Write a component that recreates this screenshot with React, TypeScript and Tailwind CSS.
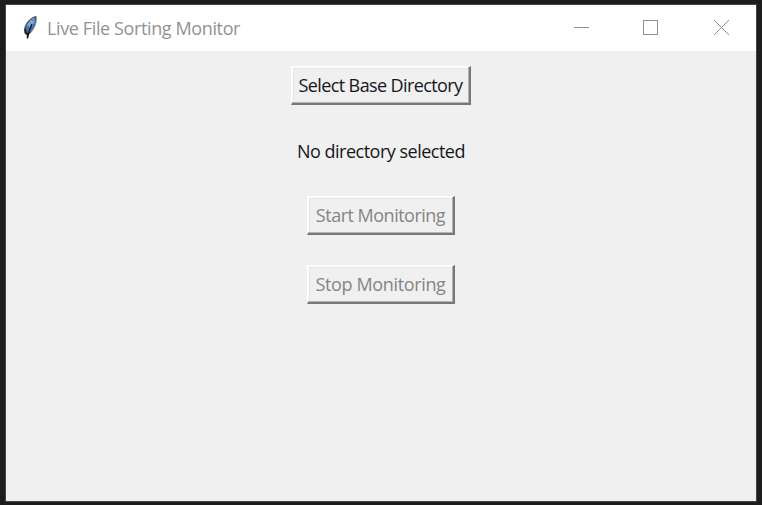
import type { ReactNode } from 'react';

function Feather() {
  return (
    <svg className="block h-6 w-[15px]" viewBox="0 0 15 24" fill="none">
      <path d="M13.500 0C10.500.2 6.500 3 3.500 7 1.200 10 .5 14 1.500 17.500l3 2C9 17 12.500 11 13.500 5z" fill="#4f5054" />
      <path d="M12 1.500C8.500 3 5 6.500 3.500 10c-1 3-1.400 5-.7 7l2 .8C9 14.500 12 9 12.500 3z" fill="#3f75b4" />
      <path d="M11 2.500C8 4.500 5.500 7 4.500 10M9.500 5L6 10.500M11.500 4.500L8.500 10" stroke="#78aee6" strokeWidth="1.500" />
      <path d="M9 8C7 12 5.500 16 4.500 22" stroke="#111" strokeWidth="1.200" />
      <path d="M13.500 1.500C13.500 7 11.500 12 8 16" stroke="#a0a0a0" strokeWidth=".8" />
      <path d="M2 13l1.500 5M4.500 17v5.500" stroke="#171717" strokeWidth="1.500" />
    </svg>
  );
}

function TkButton({ children, className, disabled = false }: { children: ReactNode; className: string; disabled?: boolean }) {
  return (
    <button
      disabled={disabled}
      className={`flex h-[39px] shrink-0 items-center justify-center border-t-[1.500px] border-r-2 border-b-2 border-l-[1.500px] border-t-white border-r-[#777] border-b-[#777] border-l-white bg-[#f0f0f0] whitespace-nowrap shadow-[inset_-1px_-1px_0_#b5b5b5,inset_1px_1px_0_#f9f9f9,inset_2px_2px_0_#e8e8e8] ${disabled ? 'text-[#858585]' : 'text-[#171520]'} ${className}`}
    >
      {children}
    </button>
  );
}

export default function App() {
  return (
    <div className="h-[505px] w-[762px] overflow-hidden bg-[#1d1d1d] pt-1 pl-[5px] font-['Open_Sans','Noto_Sans',sans-serif]">
      <main className="flex h-[498px] w-[752px] flex-col border border-[#444] bg-[#f0f0f0]">
        <header className="flex h-[46px] shrink-0 items-center bg-white pl-[17px]">
          <Feather />
          <h1 className="ml-[9px] w-[200px] text-[18px] leading-6 font-normal tracking-[-0.380px] whitespace-nowrap text-[#929292]">Live File Sorting Monitor</h1>
          <svg className="ml-[326px] block h-4 w-[170px]" viewBox="0 0 170 16" fill="none" stroke="#909090" shapeRendering="crispEdges">
            <path d="M1 7.500h15M70.500.5h14v14h-14z" />
            <path d="M141 0l15 15M156 0l-15 15" />
          </svg>
        </header>
        <section className="flex flex-col items-center pt-[15px] text-[18px]">
          <TkButton className="w-[180px] tracking-[-0.600px]">Select Base Directory</TkButton>
          <p className="mt-[34px] h-6 leading-6 tracking-[-0.500px] text-[#171520]">No directory selected</p>
          <TkButton disabled className="mt-[33px] w-[148px] tracking-[-0.500px]">Start Monitoring</TkButton>
          <TkButton disabled className="mt-[30px] w-[148px] tracking-[-0.350px]">Stop Monitoring</TkButton>
        </section>
      </main>
    </div>
  );
}
